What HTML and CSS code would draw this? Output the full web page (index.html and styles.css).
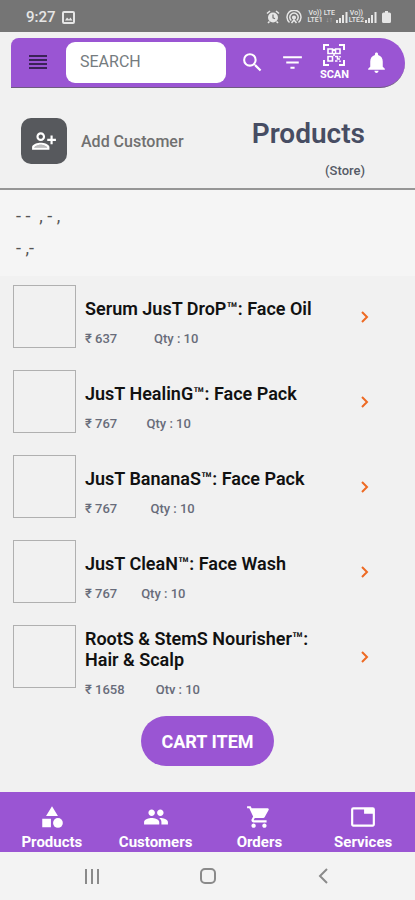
FILE: index.html
```html
<!DOCTYPE html>
<html lang="en">
<head>
<meta charset="utf-8">
<meta name="viewport" content="width=device-width, initial-scale=1">
<title>Products</title>
<link rel="stylesheet" href="styles.css">
</head>
<body>
<div class="status">
  <div class="status-left">
    <span class="time">9:27</span>
    <svg width="13" height="13" viewBox="0 0 13 13" fill="none" stroke="currentColor" stroke-width="2"><rect x="1" y="1" width="11" height="11" rx="1"/><path d="M3 9.500l2-3 2 2 1.500-2L10.500 9.500z" fill="currentColor" stroke="none"/></svg>
  </div>
  <div class="status-right">
    <svg class="alarm" width="14" height="14" viewBox="0 0 14 14"><circle cx="7" cy="7.500" r="5" fill="currentColor"/><path d="M1 3.500L4 1M13 3.500L10 1M3.500 11.500L2 13M10.500 11.500L12 13" stroke="currentColor" stroke-width="1.600"/><path d="M7 4.500v3.300l2 1" stroke="#757575" stroke-width="1.200" fill="none"/></svg>
    <svg class="hotspot" width="16" height="14" viewBox="0 0 16 14" fill="none" stroke="currentColor" stroke-width="1.500"><path d="M3.500 12.500A7 7 0 1 1 12.500 12.500M5.300 10.500A4.200 4.200 0 1 1 10.700 10.500"/><circle cx="8" cy="7.500" r="1.300" fill="currentColor"/><path d="M5.500 13L8 10l2.500 3"/></svg>
    <span class="net">Vo))<br>LTE1</span>
    <span class="net">LTE<br><span class="dim">↓↑</span></span>
    <svg width="12" height="12" viewBox="0 0 12 12" fill="currentColor"><path d="M0 9h2v3H0zM3 7h2v5H3zM6 4h2v8H6zM9.500 1h2v11h-2z"/></svg>
    <span class="net">Vo))<br>LTE2</span>
    <svg width="12" height="12" viewBox="0 0 12 12" fill="currentColor"><path d="M0 9h2v3H0zM3 7h2v5H3zM6 4h2v8H6zM9.500 1h2v11h-2z"/></svg>
    <svg class="battery" width="9" height="12" viewBox="0 0 9 12" fill="currentColor"><path d="M3 0h3v1.500h1.500Q9 1.500 9 3v7.500Q9 12 7.500 12h-6Q0 12 0 10.500V3Q0 1.500 1.500 1.500H3z"/></svg>
  </div>
</div>

<header class="toolbar">
  <button class="tool menu" aria-label="Menu"><svg width="20" height="16" viewBox="0 0 20 16" stroke="#3a2357" stroke-width="2"><path d="M1 1h18M1 5h18M1 9h18M1 13h18"/></svg></button>
  <input class="search" type="text" placeholder="SEARCH" aria-label="Search">
  <button class="tool" aria-label="Search"><svg width="25" height="25" viewBox="0 0 24 24" fill="currentColor"><path d="M15.500 14h-.79l-.28-.27A6.470 6.470 0 0 0 16 9.500 6.500 6.500 0 1 0 9.500 16c1.610 0 3.090-.59 4.230-1.570l.27.28v.79l5 4.990L20.490 19l-4.990-5zm-6 0C7.010 14 5 11.990 5 9.500S7.010 5 9.500 5 14 7.010 14 9.500 11.990 14 9.500 14z"/></svg></button>
  <button class="tool" aria-label="Filter"><svg width="25" height="25" viewBox="0 0 24 24" fill="currentColor"><path d="M10 18h4v-2h-4v2zM3 6v2h18V6H3zm3 7h12v-2H6v2z"/></svg></button>
  <button class="tool scan">
    <svg width="22" height="22" viewBox="0 0 22 22" fill="none" stroke="currentColor" stroke-width="2"><path d="M1 6V1h5M16 1h5v5M21 16v5h-5M6 21H1v-5"/><path stroke-width="1.600" d="M5 5h4.500v4.500H5zM12.500 5H17v4.500h-4.500zM5 12.500h4.500V17H5zM12 12.500h2.500V15H17M12 17h2.500M17 12v1.500M17 16.500V18M11 5v2M11 9v3"/></svg>
    <span>SCAN</span>
  </button>
  <button class="tool" aria-label="Notifications"><svg width="25" height="25" viewBox="0 0 24 24" fill="currentColor"><path d="M12 22c1.100 0 2-.9 2-2h-4c0 1.100.89 2 2 2zm6-6v-5c0-3.070-1.640-5.640-4.500-6.320V4c0-.83-.67-1.500-1.500-1.500s-1.500.67-1.500 1.500v.68C7.630 5.360 6 7.920 6 11v5l-2 2v1h16v-1l-2-2z"/></svg></button>
</header>

<section class="heading">
  <button class="add">
    <span class="add-icon"><svg width="26" height="26" viewBox="0 0 24 24" fill="currentColor"><path d="M9 12c2.210 0 4-1.790 4-4s-1.790-4-4-4-4 1.790-4 4 1.790 4 4 4zm0-6c1.100 0 2 .9 2 2s-.9 2-2 2-2-.9-2-2 .9-2 2-2zM9 13.500c-2.670 0-8 1.340-8 4V20h16v-2.500c0-2.660-5.330-4-8-4zM3 18c.22-.72 3.310-2.500 6-2.500s5.800 1.790 6 2.500H3zM20 10V7h-2v3h-3v2h3v3h2v-3h3v-2z"/><path fill-opacity=".6" d="M3 18c.2-.7 3.300-2.500 6-2.500s5.800 1.800 6 2.500z"/></svg></span>
    <span>Add Customer</span>
  </button>
  <div class="title">
    <h1>Products</h1>
    <p>(Store)</p>
  </div>
</section>

<section class="address">
  <p>- -&nbsp; , - ,</p>
  <p>- ,-</p>
</section>

<ul class="list">
  <li class="item">
    <div class="thumb"></div>
    <div class="info"><h2>Serum JusT DroP™: Face Oil</h2><p class="meta"><span>₹ 637</span><span>Qty : 10</span></p></div>
    <a class="go" href="#" aria-label="Open"><svg width="10" height="14" viewBox="0 0 10 14"><path d="M2 2l5 5-5 5"/></svg></a>
  </li>
  <li class="item">
    <div class="thumb"></div>
    <div class="info"><h2>JusT HealinG™: Face Pack</h2><p class="meta"><span>₹ 767</span><span>Qty : 10</span></p></div>
    <a class="go" href="#" aria-label="Open"><svg width="10" height="14" viewBox="0 0 10 14"><path d="M2 2l5 5-5 5"/></svg></a>
  </li>
  <li class="item">
    <div class="thumb"></div>
    <div class="info"><h2>JusT BananaS™: Face Pack</h2><p class="meta"><span>₹ 767</span><span>Qty : 10</span></p></div>
    <a class="go" href="#" aria-label="Open"><svg width="10" height="14" viewBox="0 0 10 14"><path d="M2 2l5 5-5 5"/></svg></a>
  </li>
  <li class="item">
    <div class="thumb"></div>
    <div class="info"><h2>JusT CleaN™: Face Wash</h2><p class="meta"><span>₹ 767</span><span>Qty : 10</span></p></div>
    <a class="go" href="#" aria-label="Open"><svg width="10" height="14" viewBox="0 0 10 14"><path d="M2 2l5 5-5 5"/></svg></a>
  </li>
  <li class="item">
    <div class="thumb"></div>
    <div class="info"><h2>RootS &amp; StemS Nourisher™: Hair &amp; Scalp</h2><p class="meta"><span>₹ 1658</span><span>Qty : 10</span></p></div>
    <a class="go" href="#" aria-label="Open"><svg width="10" height="14" viewBox="0 0 10 14"><path d="M2 2l5 5-5 5"/></svg></a>
  </li>
</ul>

<div class="actions"><button class="cart">CART ITEM</button></div>

<nav class="tabs">
  <a href="#"><svg width="26" height="26" viewBox="0 0 24 24" fill="currentColor"><path d="M12 2l-5.500 9h11zM3 13.500h8v8H3z"/><circle cx="17.500" cy="17.500" r="4.500"/></svg>Products</a>
  <a href="#"><svg width="26" height="26" viewBox="0 0 24 24" fill="currentColor"><path d="M16 11c1.660 0 2.990-1.340 2.990-3S17.660 5 16 5s-3 1.340-3 3 1.340 3 3 3zm-8 0c1.660 0 2.990-1.340 2.990-3S9.660 5 8 5 5 6.340 5 8s1.340 3 3 3zm0 2c-2.330 0-7 1.170-7 3.500V19h14v-2.500c0-2.330-4.670-3.500-7-3.500zm8 0c-.29 0-.62.020-.97.050 1.160.84 1.970 1.970 1.970 3.450V19h6v-2.500c0-2.330-4.670-3.500-7-3.500z"/></svg>Customers</a>
  <a href="#"><svg width="26" height="26" viewBox="0 0 24 24" fill="currentColor"><path d="M7 18c-1.100 0-1.990.9-1.990 2S5.900 22 7 22s2-.9 2-2-.9-2-2-2zM1 2v2h2l3.600 7.590-1.350 2.450c-.16.28-.25.61-.25.96 0 1.100.9 2 2 2h12v-2H7.420c-.14 0-.25-.11-.25-.25l.03-.12.9-1.630h7.450c.75 0 1.410-.41 1.750-1.030l3.580-6.490A1 1 0 0 0 20 4H5.210l-.94-2H1zm16 16c-1.100 0-1.990.9-1.990 2s.89 2 1.990 2 2-.9 2-2-.9-2-2-2z"/></svg>Orders</a>
  <a href="#"><svg width="26" height="26" viewBox="0 0 24 24" fill="currentColor"><path d="M21 3H3a2 2 0 0 0-2 2v14c0 1.100.9 2 2 2h18c1.100 0 2-.9 2-2V5a2 2 0 0 0-2-2zm0 16H3V5h10v4h8v10z"/></svg>Services</a>
</nav>

<div class="system">
  <button aria-label="Recent apps"><svg width="20" height="18" viewBox="0 0 20 18"><path d="M4 2v15M10 2v15M16 2v15"/></svg></button>
  <button aria-label="Home"><svg width="20" height="18" viewBox="0 0 20 18"><rect x="3" y="2" width="14" height="14" rx="4"/></svg></button>
  <button aria-label="Back"><svg width="20" height="18" viewBox="0 0 20 18"><path d="M14 2L7 9l7 7"/></svg></button>
</div>
</body>
</html>
```
FILE: styles.css
```css
* { box-sizing: border-box; }
body {
  margin: 0;
  height: 100vh;
  display: flex;
  flex-direction: column;
  background: #f1f1f1;
  font-family: Roboto, "Noto Sans", sans-serif;
  color: #111;
}
h1, h2, p, ul { margin: 0; padding: 0; }
button { border: 0; padding: 0; background: none; font: inherit; color: inherit; }
a { color: inherit; text-decoration: none; }
svg { display: block; flex: none; }
body > * { flex: none; }

.status {
  height: 32px;
  padding: 2px 24px 0 26px;
  background: #757575;
  color: #e6e6e6;
  display: flex;
  align-items: center;
  justify-content: space-between;
}
.status-left { display: flex; align-items: center; gap: 6px; }
.time { font-size: 15px; font-weight: 500; }
.status-right { display: flex; align-items: center; gap: 1px; }
.alarm, .hotspot { margin-right: 5px; }
.battery { margin-left: 4px; }
.net { font-size: 7px; line-height: 7px; font-weight: 500; text-align: center; }
.dim { opacity: 0.5; }

.toolbar {
  margin: 6px 10px 0 11px;
  height: 50px;
  padding: 0 16px 0 17px;
  background: #9a55d3;
  border-bottom: 1px solid #6f5a80;
  border-radius: 8px 26px 26px 0;
  color: #fff;
  display: flex;
  align-items: center;
  justify-content: space-between;
}
.menu { margin-right: 18px; }
.search {
  flex: 1;
  min-width: 0;
  height: 41px;
  margin-right: 6px;
  border: 0;
  border-radius: 9px;
  padding: 0 14px 2px;
  background: #fff;
  font: 400 16px Roboto, sans-serif;
}
.search::placeholder { color: #757c80; opacity: 1; }
.tool { min-width: 20px; }
.tool + .tool { margin-left: 15px; }
.search + .tool { margin-left: 8px; }
.scan { display: flex; flex-direction: column; align-items: center; gap: 3px; }
.scan span { font-size: 11px; line-height: 12px; font-weight: 700; }

.heading {
  height: 102px;
  padding: 0 50px 0 21px;
  border-bottom: 2px solid #969696;
  display: flex;
  justify-content: space-between;
}
.add {
  display: flex;
  align-items: center;
  align-self: flex-start;
  gap: 14px;
  margin-top: 30px;
  font-size: 16px;
  font-weight: 500;
  color: #707070;
}
.add-icon {
  width: 46px;
  height: 46px;
  border-radius: 10px;
  background: #57595d;
  color: #fff;
  display: grid;
  place-items: center;
}
.title { text-align: right; padding-top: 29px; color: #474d63; }
.title h1 { font-size: 28px; line-height: 34px; font-weight: 600; }
.title p { font-size: 13px; line-height: 16px; margin-top: 12px; font-weight: 500; color: #555a66; }

.address {
  height: 86px;
  padding: 10px 16px;
  background: #f5f5f5;
  font-size: 18px;
  line-height: 32px;
  color: #555;
}

.list {
  flex: 1;
  min-height: 0;
  overflow: hidden;
  list-style: none;
  padding: 9px 45px 0 13px;
  display: flex;
  flex-direction: column;
  gap: 9px;
}
.item { flex: none; display: flex; min-height: 76px; gap: 9px; }
.thumb { flex: none; width: 63px; height: 63px; border: 1px solid #b0b0b0; }
.info { align-self: center; max-width: 230px; }
.info h2 { font-size: 18px; line-height: 21px; font-weight: 600; color: #111; }
.meta {
  width: 50%;
  margin-top: 11px;
  display: flex;
  justify-content: space-between;
  white-space: nowrap;
  font-size: 13px;
  line-height: 18px;
  font-weight: 500;
  color: #686c7a;
}
.go { margin-left: auto; height: 63px; display: flex; align-items: center; }
.go path { fill: none; stroke: #ee6a23; stroke-width: 2; }

.actions { padding: 22px 0 26px; display: flex; justify-content: center; }
.cart {
  height: 50px;
  padding: 0 20px;
  border-radius: 25px;
  background: #9a55d3;
  color: #fff;
  font-size: 18px;
  font-weight: 700;
}

.tabs {
  height: 60px;
  background: #9a55d3;
  color: #fff;
  display: grid;
  grid-template-columns: repeat(4, 1fr);
}
.tabs a {
  display: flex;
  flex-direction: column;
  align-items: center;
  padding-top: 12px;
  font-size: 15px;
  line-height: 24px;
  font-weight: 700;
}

.system {
  height: 48px;
  padding: 0 82px;
  background: #f3f3f3;
  display: flex;
  align-items: center;
  justify-content: space-between;
}
.system svg { fill: none; stroke: #8a8a8a; stroke-width: 2; }
```
